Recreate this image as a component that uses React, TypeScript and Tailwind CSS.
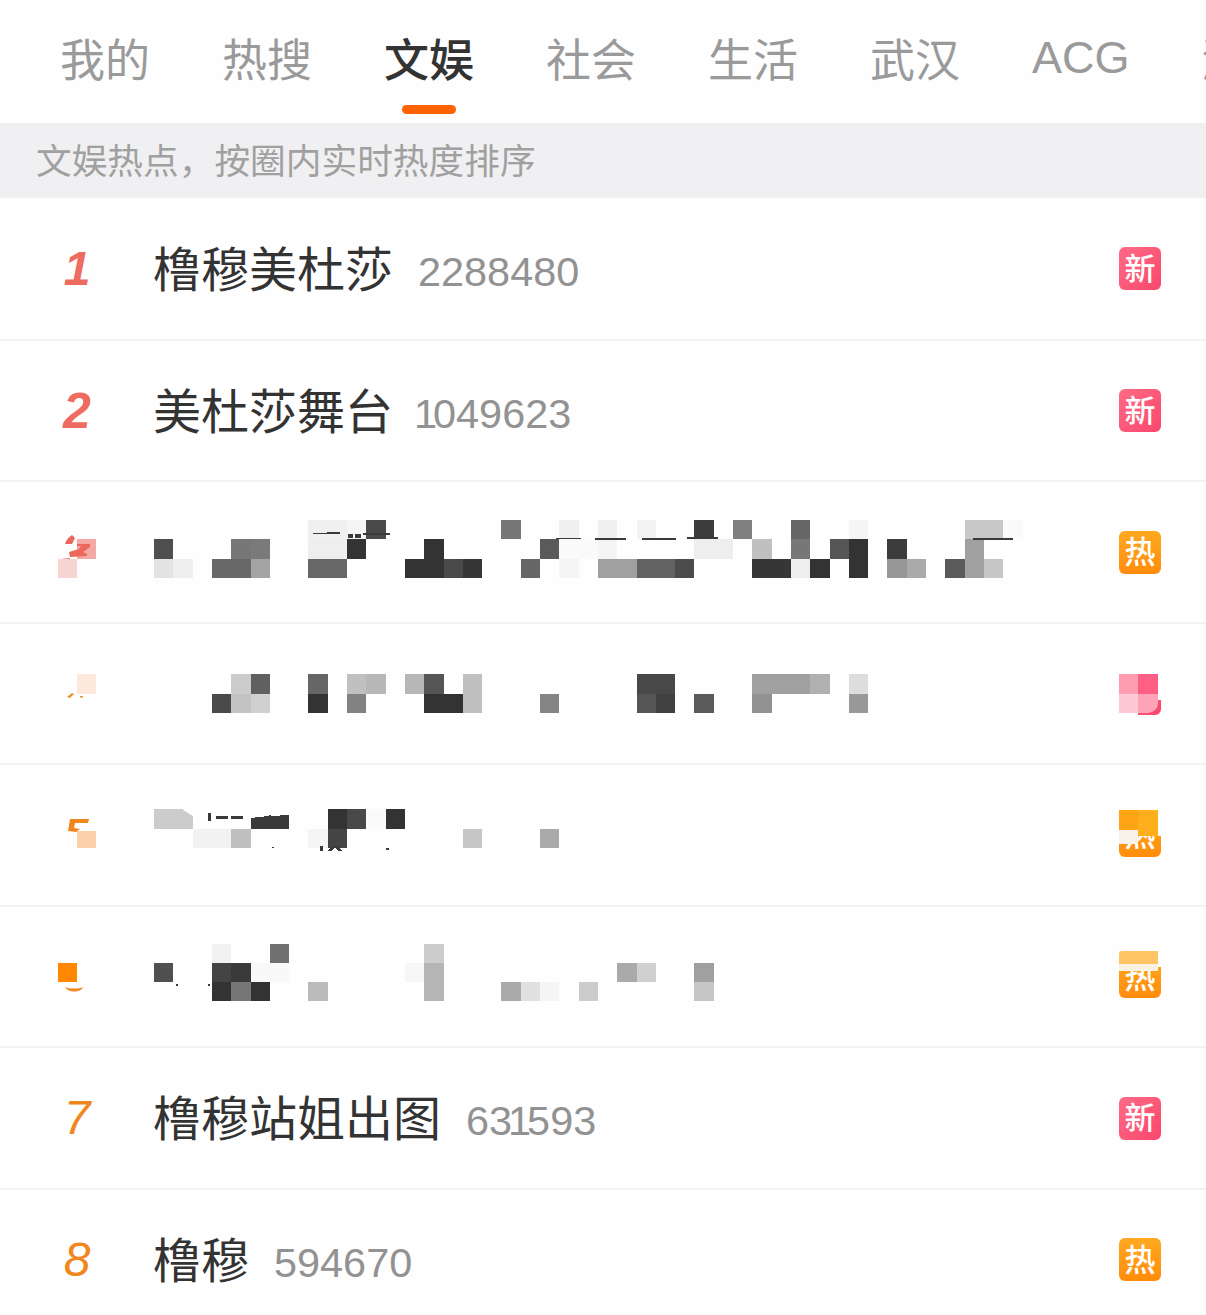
import React from "react";

type Cell = [number, string];
type Mosaic = { ys: number[]; rows: Cell[][]; bits?: string[]; covers?: string[] };

const CW = 19.3;
const cjk = "font-['Noto_Sans_CJK_SC',sans-serif]";
const latin = "font-['Liberation_Sans',sans-serif]";

const tabs = ["我的", "热搜", "文娱", "社会", "生活", "武汉", "ACG", "游戏"];

// pixelated titles, cols are 19.3px wide counted from the title's left edge
const mosaic3: Mosaic = {
  ys: [38, 57, 77, 96],
  rows: [
    [[8, "#f0f0f0"], [9, "#f0f0f0"], [10, "#f5f5f5"], [11, "#4a4a4a"], [18, "#777777"], [21, "#f0f0f0"], [23, "#f0f0f0"], [25, "#f3f3f3"], [28, "#3c3c3c"], [30, "#808080"], [33, "#666666"], [36, "#f5f5f5"], [42, "#c8c8c8"], [43, "#c8c8c8"], [44, "#fafafa"]],
    [[0, "#4f4f4f"], [4, "#777777"], [5, "#7a7a7a"], [8, "#eeeeee"], [9, "#eeeeee"], [10, "#333333"], [14, "#333333"], [20, "#5a5a5a"], [21, "#fafafa"], [22, "#fafafa"], [23, "#f5f5f5"], [28, "#eeeeee"], [29, "#eeeeee"], [31, "#c0c0c0"], [33, "#777777"], [35, "#555555"], [36, "#333333"], [38, "#3c3c3c"], [42, "#a0a0a0"]],
    [[0, "#e3e3e3"], [1, "#efefef"], [3, "#686868"], [4, "#686868"], [5, "#a3a3a3"], [8, "#676767"], [9, "#676767"], [13, "#333333"], [14, "#333333"], [15, "#4a4a4a"], [16, "#363636"], [19, "#666666"], [21, "#f5f5f5"], [23, "#a0a0a0"], [24, "#a0a0a0"], [25, "#626262"], [26, "#626262"], [27, "#4c4c4c"], [31, "#363636"], [32, "#363636"], [33, "#eeeeee"], [34, "#333333"], [36, "#333333"], [38, "#969696"], [39, "#aaaaaa"], [41, "#5a5a5a"], [42, "#a0a0a0"], [43, "#c6c6c6"]],
  ],
  bits: ["M159 51l27-1v2l-27 0z", "M194 52h5v4h-5zM201 52h6v4h-6zM209 51h27v2h-27z", "M402 56h25v1h-25z", "M441 56h31v1.500h-31z", "M488 56h34v1.500h-34z", "M533 55h31v1.500h-31z", "M819 56h40v1.500h-40z"],
};

const mosaic4: Mosaic = {
  ys: [50, 70, 89],
  rows: [
    [[4, "#cccccc"], [5, "#606060"], [8, "#666666"], [10, "#c0c0c0"], [11, "#b8b8b8"], [13, "#b8b8b8"], [14, "#555555"], [16, "#c0c0c0"], [25, "#484848"], [26, "#484848"], [31, "#a0a0a0"], [32, "#a0a0a0"], [33, "#a0a0a0"], [34, "#b0b0b0"], [36, "#dddddd"]],
    [[3, "#4a4a4a"], [4, "#c3c3c3"], [5, "#d0d0d0"], [8, "#333333"], [10, "#828282"], [14, "#333333"], [15, "#333333"], [16, "#c0c0c0"], [20, "#858585"], [25, "#555555"], [26, "#404040"], [28, "#5a5a5a"], [31, "#929292"], [36, "#999999"]],
  ],
};

const mosaic5: Mosaic = {
  ys: [44, 64, 83],
  rows: [
    [[0, "#cccccc"], [1, "#cccccc"], [9, "#333333"], [10, "#484848"], [11, "#fafafa"], [12, "#333333"]],
    [[2, "#f2f2f2"], [3, "#f2f2f2"], [4, "#c0c0c0"], [8, "#f5f5f5"], [9, "#444444"], [16, "#c6c6c6"], [20, "#aaaaaa"]],
  ],
  bits: ["M97 53l18-2 1-2 1 2 18-1v14h-38z", "M54 48h2.500v8h-2.500zM62 51h12v2.500h-12zM77 51h12v2.500h-12z", "M118 83h2v-1h-2zM166 86v-5h3v5zM173 86l6-5h4l5 5h-3l-4-3-4 3zM232 85h3v-2h-3z"],
  covers: ["M28 44h12v8z"],
};

const mosaic6: Mosaic = {
  ys: [37, 56, 75, 94],
  rows: [
    [[3, "#f2f2f2"], [6, "#707070"], [14, "#cccccc"]],
    [[0, "#505050"], [3, "#444444"], [4, "#3a3a3a"], [5, "#f9f9f9"], [6, "#f9f9f9"], [13, "#f7f7f7"], [14, "#b5b5b5"], [24, "#aaaaaa"], [25, "#d0d0d0"], [28, "#a0a0a0"]],
    [[3, "#333333"], [4, "#777777"], [5, "#333333"], [8, "#bbbbbb"], [14, "#b5b5b5"], [18, "#aaaaaa"], [19, "#e0e0e0"], [20, "#f5f5f5"], [22, "#cccccc"], [28, "#c6c6c6"]],
  ],
  bits: ["M22 77h2v2h-2zM54 77h2v2h-2z"],
};

function MosaicTitle({ data }: { data: Mosaic }) {
  return (
    <svg width="900" height="140" className="shrink-0" shapeRendering="crispEdges">
      {data.rows.map((row, r) =>
        row.map(([col, color]) => (
          <rect
            key={`${r}-${col}`}
            x={Math.round(col * CW)}
            y={data.ys[r]}
            width={Math.round((col + 1) * CW) - Math.round(col * CW)}
            height={data.ys[r + 1] - data.ys[r]}
            fill={color}
          />
        ))
      )}
      {data.covers?.map((d) => <path key={d} d={d} fill="#fefefe" />)}
      {data.bits?.map((d) => <path key={d} d={d} fill="#3a3a3a" />)}
    </svg>
  );
}

function Rank({ n }: { n: number }) {
  const base = `w-[38px] text-center italic text-[48px] leading-none ${latin}`;
  if (n === 1) return <div className={`${base} font-bold text-[#ee6b60]`}>1</div>;
  if (n === 2) return <div className={`${base} font-bold text-[50px] text-[#ee6b60]`}>2</div>;
  if (n === 7) return <div className={`${base} font-normal text-[#ef861e]`}>7</div>;
  if (n === 8) return <div className={`${base} font-normal text-[#ef861e]`}>8</div>;
  // pixelated ranks: what is left of the digit under the mosaic
  return (
    <svg width="38" height="140" viewBox="0 0 38 140" className="shrink-0">
      {n === 3 && (
        <g>
          <rect x="19" y="57" width="19" height="20" fill="#f5a9a5" />
          <rect x="0" y="77" width="19" height="19" fill="#f6d4d2" />
          <path d="M7 62c1-4 4-7 7-9l3 3-3 6zM19 62h13v3l-7 5 4 2v2l-17 1-1-5 10-3 2-3h-4zM3 77l9-1v1z" fill="#ec675c" />
        </g>
      )}
      {n === 4 && (
        <g>
          <rect x="19" y="50" width="19" height="20" fill="#fde8dc" />
          <path d="M9 73l5-4 2 1-4 4zM22 72h3v1.500h-3z" fill="#e8922a" />
        </g>
      )}
      {n === 5 && (
        <g>
          <path d="M12 54h19l-1 4H17l-1 5 6 1-4 3-8-1z" fill="#ef861e" />
          <rect x="19" y="66" width="19" height="17" fill="#fcd0a8" />
        </g>
      )}
      {n === 6 && (
        <g>
          <rect x="0" y="56" width="19" height="19" fill="#ff8800" />
          <path d="M7 80c4 2 14 2 18 0-2 6-15 6-18 0z" fill="#ef861e" />
        </g>
      )}
    </svg>
  );
}

function Badge({ kind, children }: { kind: "new" | "hot"; children?: React.ReactNode }) {
  const color =
    kind === "new"
      ? "bg-gradient-to-br from-[#ff6a85] to-[#f9466d]"
      : "bg-gradient-to-b from-[#ffa820] to-[#ff8c0a]";
  return (
    <div
      className={`relative ml-auto mr-[45px] w-[42px] h-[43px] shrink-0 rounded-[6px] ${color} flex items-center justify-center pb-[5px] text-white text-[31px] font-medium leading-none ${cjk}`}
    >
      {kind === "new" ? "新" : "热"}
      {children}
    </div>
  );
}

function Title({ name, count }: { name: string; count: string }) {
  // the reference's digits are proportional: the 1 takes less room on both sides
  const leadingOne = count[0] === "1";
  return (
    <div className="flex items-center -ml-[1px]">
      <span className={`text-[48px] leading-none pb-[6px] text-[#333333] ${cjk}`}>{name}</span>
      <span className={`${leadingOne ? "ml-[21px]" : "ml-[25px]"} mt-[8px] text-[41.4px] leading-none text-[#929292] ${latin}`}>
        {count.split("").map((d, i) =>
          d === "1" || count[i + 1] === "1" ? (
            <span key={i} className="tracking-[-4px]">
              {d}
            </span>
          ) : (
            d
          )
        )}
      </span>
    </div>
  );
}

function Row({ n, h, children, badge }: { n: number; h: string; children: React.ReactNode; badge: React.ReactNode }) {
  return (
    <div className={`${h} flex items-center pl-[58px] border-b-2 border-[#f2f2f4]`}>
      <Rank n={n} />
      <div className="ml-[58px] min-w-0 flex items-center">{children}</div>
      {badge}
    </div>
  );
}

export default function App() {
  return (
    <div className={`w-[1206px] h-[1315px] overflow-hidden bg-[#fefefe] ${cjk}`}>
      <div className="h-[123px] pl-[60px] flex gap-[72px] overflow-hidden">
        {tabs.map((t, i) => (
          <div key={t} className="relative h-full shrink-0 pt-[29px]">
            <span className={`text-[45px] leading-[58px] ${i === 2 ? "font-medium text-[#333333]" : "text-[#9a9a9a]"} ${t === "ACG" ? `${latin} text-[43.5px]` : ""}`}>
              {t}
            </span>
            {i === 2 && (
              <div className="absolute left-[18px] top-[105px] w-[54px] h-[9px] rounded-full bg-[#ff6200]" />
            )}
          </div>
        ))}
      </div>
      <div className="h-[75px] flex items-center pl-[36px] pb-[3px] bg-[#f0f0f2] text-[35.7px] leading-none text-[#a0a0a0]">
        文娱热点，按圈内实时热度排序
      </div>

      <Row n={1} h="h-[143px]" badge={<Badge kind="new" />}>
        <Title name="橹穆美杜莎" count="2288480" />
      </Row>
      <Row n={2} h="h-[141px]" badge={<Badge kind="new" />}>
        <Title name="美杜莎舞台" count="1049623" />
      </Row>
      <Row n={3} h="h-[142px]" badge={<Badge kind="hot" />}>
        <MosaicTitle data={mosaic3} />
      </Row>
      <Row
        n={4}
        h="h-[141px]"
        badge={
          <Badge kind="new">
            <div className="absolute left-0 top-0 w-[42px] h-[2px] bg-[#fefefe]" />
            <div className="absolute left-[39px] top-0 w-[3px] h-[28px] bg-[#fefefe]" />
            <div className="absolute left-0 top-[41px] w-[19px] h-[2px] bg-[#fefefe]" />
            <div className="absolute left-0 top-[2px] w-[19px] h-[20px] bg-[#ff9cb0]" />
            <div className="absolute left-[19px] top-[2px] w-[20px] h-[20px] bg-[#ff5f85]" />
            <div className="absolute left-0 top-[22px] w-[19px] h-[19px] bg-[#ffc8d4]" />
            <div className="absolute left-[19px] top-[22px] w-[20px] h-[19px] rounded-br-[10px] bg-[#ffa4b8]" />
          </Badge>
        }
      >
        <MosaicTitle data={mosaic4} />
      </Row>
      <Row
        n={5}
        h="h-[142px]"
        badge={
          <Badge kind="hot">
            <div className="absolute left-[39px] top-0 w-[3px] h-[22px] bg-[#fefefe]" />
            <div className="absolute left-0 top-[-4px] w-[19px] h-[20px] bg-[#ffa514]" />
            <div className="absolute left-[19px] top-[-4px] w-[20px] h-[26px] bg-[#ffae1c]" />
            <div className="absolute left-0 top-[16px] w-[19px] h-[14px] bg-[#f7f3ea]" />
          </Badge>
        }
      >
        <MosaicTitle data={mosaic5} />
      </Row>
      <Row
        n={6}
        h="h-[141px]"
        badge={
          <Badge kind="hot">
            <div className="absolute left-[39px] top-0 w-[3px] h-[12px] bg-[#fefefe]" />
            <div className="absolute left-0 top-[-4px] w-[39px] h-[13px] rounded-tl-[3px] bg-[#ffc466]" />
            <div className="absolute left-0 top-[9px] w-[39px] h-[7px] bg-[#f9f1e2]" />
          </Badge>
        }
      >
        <MosaicTitle data={mosaic6} />
      </Row>
      <Row n={7} h="h-[142px]" badge={<Badge kind="new" />}>
        <Title name="橹穆站姐出图" count="631593" />
      </Row>
      <Row n={8} h="h-[141px]" badge={<Badge kind="hot" />}>
        <Title name="橹穆" count="594670" />
      </Row>
    </div>
  );
}
